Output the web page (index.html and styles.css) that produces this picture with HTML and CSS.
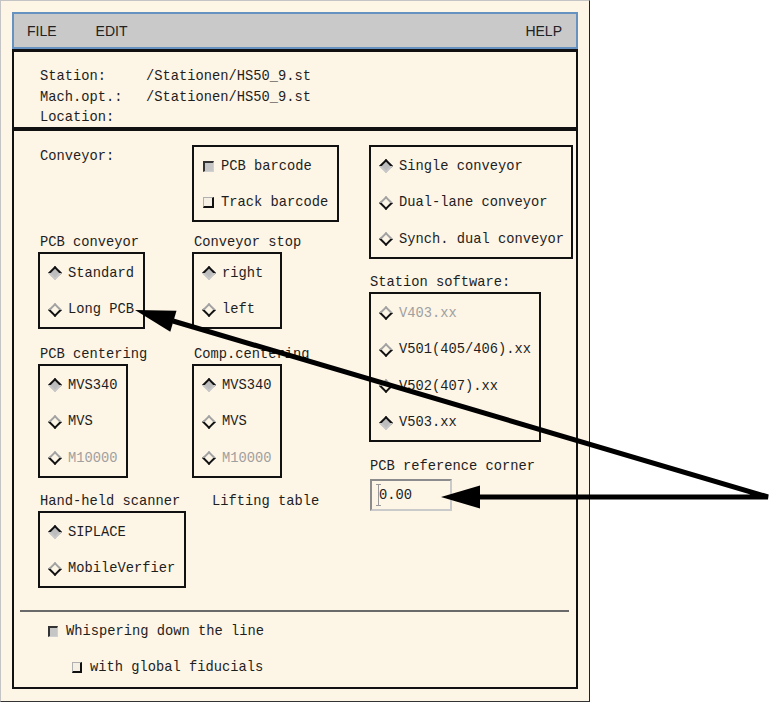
FILE: index.html
```html
<!DOCTYPE html>
<html lang="en">
<head>
    <meta charset="UTF-8">
    <meta name="viewport" content="width=device-width, initial-scale=1.0">
    <title>Station setup</title>
    <link rel="stylesheet" href="styles.css">
</head>
<body>
    <div class="window">
        <div class="menubar">
            <span class="menu">FILE</span>
            <span class="menu">EDIT</span>
            <span class="menu help">HELP</span>
        </div>

        <div class="header">
            <div class="hrow"><span class="hkey">Station:</span><span>/Stationen/HS50_9.st</span></div>
            <div class="hrow"><span class="hkey">Mach.opt.:</span><span>/Stationen/HS50_9.st</span></div>
            <div class="hrow"><span class="hkey">Location:</span></div>
        </div>

        <div class="panel">
            <div class="upper">
                <div class="left">
                    <div class="row">
                        <div class="field"><span class="label first">Conveyor:</span></div>
                        <div class="field">
                            <div class="box w-barcode">
                                <div class="item chk"><span class="cb on"></span>PCB barcode</div>
                                <div class="item chk"><span class="cb"></span>Track barcode</div>
                            </div>
                        </div>
                    </div>

                    <div class="row r2">
                        <div class="field">
                            <span class="label">PCB conveyor</span>
                            <div class="box w-pcbconv">
                                <div class="item"><span class="rd on"></span>Standard</div>
                                <div class="item"><span class="rd"></span>Long PCB</div>
                            </div>
                        </div>
                        <div class="field">
                            <span class="label">Conveyor stop</span>
                            <div class="box w-small">
                                <div class="item"><span class="rd on"></span>right</div>
                                <div class="item"><span class="rd"></span>left</div>
                            </div>
                        </div>
                    </div>

                    <div class="row r3">
                        <div class="field">
                            <span class="label">PCB centering</span>
                            <div class="box w-small">
                                <div class="item"><span class="rd on"></span>MVS340</div>
                                <div class="item"><span class="rd"></span>MVS</div>
                                <div class="item dim"><span class="rd"></span>M10000</div>
                            </div>
                        </div>
                        <div class="field">
                            <span class="label">Comp.centering</span>
                            <div class="box w-small">
                                <div class="item"><span class="rd on"></span>MVS340</div>
                                <div class="item"><span class="rd"></span>MVS</div>
                                <div class="item dim"><span class="rd"></span>M10000</div>
                            </div>
                        </div>
                    </div>

                    <div class="row r4">
                        <div class="field">
                            <span class="label">Hand-held scanner</span>
                            <div class="box w-scanner">
                                <div class="item"><span class="rd on"></span>SIPLACE</div>
                                <div class="item"><span class="rd"></span>MobileVerfier</div>
                            </div>
                        </div>
                        <div class="field">
                            <span class="label lifting">Lifting table</span>
                        </div>
                    </div>
                </div>

                <div class="right">
                    <div class="box w-conveyor">
                        <div class="item"><span class="rd on"></span>Single conveyor</div>
                        <div class="item"><span class="rd"></span>Dual-lane conveyor</div>
                        <div class="item"><span class="rd"></span>Synch. dual conveyor</div>
                    </div>

                    <span class="label gap">Station software:</span>
                    <div class="box w-software">
                        <div class="item dim"><span class="rd"></span>V403.xx</div>
                        <div class="item"><span class="rd"></span>V501(405/406).xx</div>
                        <div class="item"><span class="rd"></span>V502(407).xx</div>
                        <div class="item"><span class="rd on"></span>V503.xx</div>
                    </div>

                    <span class="label gap">PCB reference corner</span>
                    <div class="input">
                        <svg class="caret" width="5" height="22" viewBox="0 0 5 22">
                            <path d="M0 0.5H5M2.5 0V22M0 21.5H5" stroke="#9a9a9a" stroke-width="1" fill="none"/>
                        </svg>
                        <span>0.00</span>
                    </div>
                </div>
            </div>

            <div class="separator"></div>

            <div class="checkrow"><span class="cb on"></span>Whispering down the line</div>
            <div class="checkrow indent"><span class="cb"></span>with global fiducials</div>
        </div>
    </div>

    <!-- annotation arrows drawn over the dialog -->
    <svg class="annot" width="770" height="703" viewBox="0 0 770 703">
        <polyline points="173,321 768,497 476,497" fill="none" stroke="#000" stroke-width="5" stroke-linejoin="miter"/>
        <polygon points="135,310 176.5,310.8 170.3,331.8" fill="#000"/>
        <polygon points="441,497 480,485.5 480,508.5" fill="#000"/>
    </svg>
</body>
</html>
```

FILE: styles.css
```css
body {
    margin: 0;
    background-color: #ffffff;
    font-family: "Liberation Mono", monospace;
    font-size: 13.75px;
    color: #1e1e1e;
    overflow: hidden;
}
.window {
    width: 590px;
    height: 702px;
    box-sizing: border-box;
    background-color: #fdf5e6;
    border-left: 1px solid #c4c4c4;
    border-top: 1px solid #c4c4c4;
    border-right: 1px solid #222;
    border-bottom: 1px solid #333;
    padding: 11px 11px 0 11px;
}
.menubar {
    height: 37px;
    box-sizing: border-box;
    border: 2px solid #6692c2;
    background-color: #c9c9c9;
    display: flex;
    align-items: center;
    padding: 0 14px 0 13px;
    font-family: "Liberation Sans", Arial, sans-serif;
    font-size: 14px;
    color: #222;
}
.menu {
    margin-right: 39px;
}
.menu.help {
    margin-left: auto;
    margin-right: 0;
}
.header {
    height: 80px;
    box-sizing: border-box;
    border: 2px solid #111;
    border-top-width: 3px;
    padding: 15px 0 0 26px;
}
.hrow {
    line-height: 20.5px;
    height: 20.5px;
}
.hkey {
    display: inline-block;
    width: 106px;
}
.panel {
    height: 560px;
    box-sizing: border-box;
    border: 2px solid #111;
    padding-top: 14px;
}
.upper {
    display: flex;
}
.left {
    width: 355px;
    box-sizing: border-box;
    padding-left: 24px;
}
.row {
    display: flex;
}
.row > .field:first-child {
    width: 154px;
}
.row.r2 {
    margin-top: 10px;
}
.row.r3 {
    margin-top: 15px;
}
.row.r4 {
    margin-top: 13.5px;
}
.field {
    display: flex;
    flex-direction: column;
    align-items: flex-start;
    gap: 2px;
}
.label {
    line-height: 21px;
    height: 18px;
    margin-left: 2px;
    white-space: nowrap;
}
.label.first {
    margin-top: 1px;
}
.label.lifting {
    margin-left: 20px;
}
.box {
    border: 2px solid #111;
    box-sizing: border-box;
}
.w-barcode { width: 147px; }
.w-pcbconv { width: 107px; }
.w-small { width: 90px; }
.w-scanner { width: 148px; }
.w-conveyor { width: 204px; }
.w-software { width: 172px; }
.item {
    display: flex;
    align-items: center;
    height: 36.5px;
    box-sizing: border-box;
    padding: 2px 0 0 8px;
    gap: 7px;
    white-space: nowrap;
}
.item.chk {
    padding-left: 9px;
}
.dim {
    color: #a0a0a0;
}
.rd {
    width: 10px;
    height: 10px;
    box-sizing: border-box;
    margin: 0 1.5px;
    flex: none;
    transform: rotate(45deg);
    border-style: solid;
    border-width: 2px 2.5px 2.5px 2px;
    border-color: #a2a2a2 #111 #111 #a2a2a2;
}
.rd.on {
    border-width: 2.5px 2px 2px 2.5px;
    border-color: #111 #c8c8c8 #c8c8c8 #111;
    background-color: #bdbdbd;
}
.cb {
    width: 11px;
    height: 11px;
    box-sizing: border-box;
    flex: none;
    border-style: solid;
    border-width: 1.5px 2px 2px 1.5px;
    border-color: #b0b0b0 #111 #111 #b0b0b0;
    background-color: #f6f0e4;
}
.cb.on {
    border-width: 2px 1.5px 1.5px 2px;
    border-color: #333 #d0d0d0 #d0d0d0 #333;
    background-color: #c6c6c6;
}
.right {
    display: flex;
    flex-direction: column;
    align-items: flex-start;
}
.right .label {
    margin-left: 1px;
}
.right .label.gap {
    margin-top: 13.5px;
    margin-bottom: 2px;
}
.input {
    width: 82px;
    height: 32px;
    box-sizing: border-box;
    margin-top: 3px;
    margin-left: 1px;
    border: 2px solid;
    border-color: #8c8c8c #cacaca #cacaca #8c8c8c;
    display: flex;
    align-items: center;
    padding: 1px 0 0 4px;
    color: #222;
}
.caret {
    margin-right: -2px;
}
.separator {
    height: 2px;
    margin: 22px 7px 0 6px;
    background-color: #6a6a6a;
}
.checkrow {
    display: flex;
    align-items: center;
    height: 36.5px;
    box-sizing: border-box;
    padding: 2px 0 0 34px;
    gap: 8px;
    white-space: nowrap;
}
.checkrow .cb {
    width: 10px;
    height: 11px;
}
.checkrow.indent {
    padding-left: 58px;
}
.annot {
    position: absolute;
    left: 0;
    top: 0;
    pointer-events: none;
}
```
